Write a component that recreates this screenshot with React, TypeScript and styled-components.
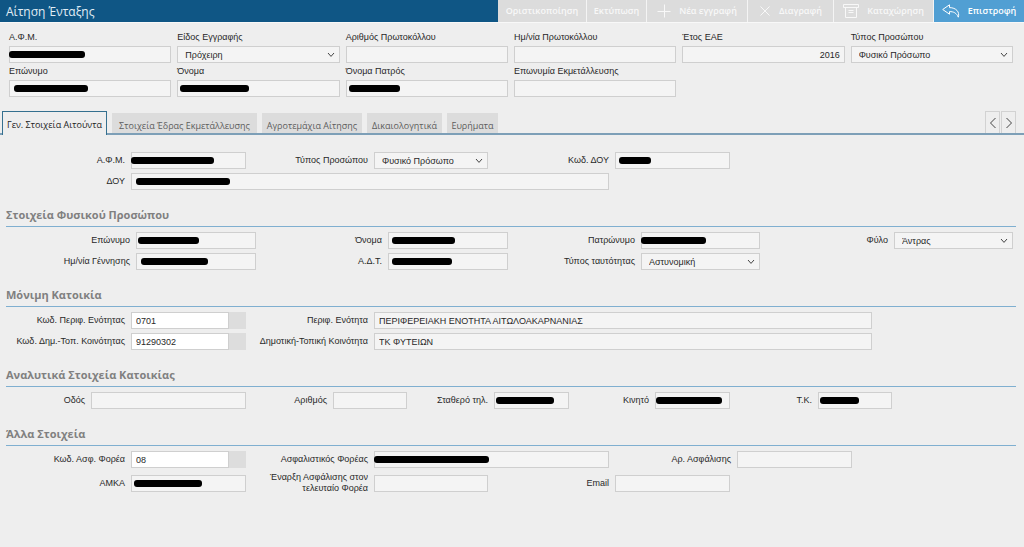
import React, { useId } from 'react';
import styled, { createGlobalStyle } from 'styled-components';

const GlobalStyle = createGlobalStyle`
  * { box-sizing: border-box; }
  body {
    margin: 0;
    background: #eeeeee;
    color: #282828;
    font-family: 'Liberation Sans', Arial, sans-serif;
    font-size: 9px;
    line-height: 12px;
  }
  button, input, select { font: inherit; color: inherit; }
`;

const uiFont = `'Open Sans', 'Noto Sans', sans-serif`;

const TopBar = styled.header`
  display: flex;
  height: 23px;
  border-bottom: 1px solid #f8f8f8;
  background: #0f5685;
`;

const PageTitle = styled.h1`
  flex: 1;
  margin: 0;
  padding-left: 6px;
  font: 400 12px/23px ${uiFont};
  color: #e2eef6;
`;

const Toolbar = styled.div`
  display: flex;
  gap: 1px;
  background: #f4f4f4;
`;

const ToolButton = styled.button<{ $width: number; $primary?: boolean }>`
  display: flex;
  align-items: center;
  justify-content: center;
  gap: 8px;
  width: ${p => p.$width}px;
  padding: 0;
  border: 0;
  background: ${p => (p.$primary ? '#519fd3' : '#dcdcdc')};
  color: ${p => (p.$primary ? '#ffffff' : '#f8f8f8')};
  font: 600 9px/22px ${uiFont};
  white-space: nowrap;
  svg { flex: none; }
`;

const Summary = styled.section`
  display: grid;
  grid-template-columns: repeat(6, minmax(0, 1fr));
  gap: 3px 6px;
  padding: 9px 11px 0 9px;
`;

const StackedField = styled.div`
  display: flex;
  flex-direction: column;
  gap: 4px;
  > label { line-height: 10px; height: 10px; }
`;

const ControlBox = styled.div`
  position: relative;
  display: flex;
  min-width: 0;
`;

const TextInput = styled.input<{ $editable?: boolean; $right?: boolean }>`
  flex: 1;
  min-width: 0;
  width: 100%;
  height: 17px;
  padding: 0 4px;
  border: 1px solid #cfcfcf;
  border-radius: 0;
  background: ${p => (p.$editable ? '#ffffff' : '#f4f4f4')};
  text-align: ${p => (p.$right ? 'right' : 'left')};
  outline: 0;
`;

const SelectInput = styled.select`
  flex: 1;
  min-width: 0;
  height: 17px;
  padding: 0 18px 0 7px;
  border: 1px solid #cfcfcf;
  border-radius: 0;
  background: #f4f4f4;
  appearance: none;
  outline: 0;
`;

const SelectArrow = styled.svg`
  position: absolute;
  right: 5px;
  top: 6px;
  pointer-events: none;
`;

const LookupButton = styled.button`
  width: 17px;
  height: 17px;
  padding: 0;
  border: 0;
  background: #dddddd;
`;

const Mark = styled.span<{ $left: number; $width: number }>`
  position: absolute;
  left: ${p => p.$left}px;
  top: 5px;
  width: ${p => p.$width}px;
  height: 7px;
  border-radius: 3px;
  background: #000000;
`;

const TabBar = styled.nav`
  display: flex;
  align-items: flex-end;
  gap: 5px;
  margin-top: 14px;
  padding: 0 8px 0 2px;
  border-bottom: 2px solid #7d9fb7;
`;

const Tab = styled.button<{ $width: number; $active?: boolean }>`
  width: ${p => p.$width}px;
  height: ${p => (p.$active ? 24 : 20)}px;
  margin-bottom: ${p => (p.$active ? -2 : 0)}px;
  padding: ${p => (p.$active ? '2px 0 0' : '6px 0 0')};
  border: ${p => (p.$active ? '1px solid #35708f' : '0')};
  border-bottom: 0;
  background: ${p => (p.$active ? '#eeeeee' : '#dcdcdc')};
  color: ${p => (p.$active ? '#222222' : '#5c5c5c')};
  font: 400 9px/14px ${uiFont};
  white-space: nowrap;
`;

const TabPager = styled.div`
  display: flex;
  gap: 1px;
  margin-left: auto;
`;

const PagerButton = styled.button`
  display: grid;
  place-items: center;
  width: 15px;
  height: 22px;
  padding: 0;
  border: 1px solid #d2d2d2;
  border-bottom: 0;
  background: #eeeeee;
`;

const Block = styled.section`
  padding-top: 13px;
  &:first-child { padding-top: 17px; }
`;

const SectionTitle = styled.h2`
  margin: 0 8px 5px 6px;
  padding-bottom: 3px;
  border-bottom: 1px solid #7fafd0;
  color: #808080;
  font: 700 11px/16px ${uiFont};
`;

const Row = styled.div<{ $cols: number[] }>`
  display: grid;
  grid-template-columns: ${p => p.$cols.map(c => `minmax(0, ${c}fr)`).join(' ')};
  align-items: center;
  margin-bottom: 4px;
`;

const SideLabel = styled.label`
  padding-right: 6px;
  text-align: right;
  line-height: 11px;
  white-space: pre-line;
`;

type FieldProps = {
  label: string;
  value?: string;
  kind?: 'text' | 'select' | 'lookup';
  mark?: [number, number];
  right?: boolean;
};

function Control({ id, value = '', kind = 'text', mark, right }: FieldProps & { id: string }) {
  return (
    <ControlBox>
      {kind === 'select' ? (
        <>
          <SelectInput id={id} defaultValue={value}>
            <option>{value}</option>
          </SelectInput>
          <SelectArrow width="8" height="6" viewBox="0 0 8 6" fill="none" stroke="#444">
            <path d="M1 1l3 3.4L7 1" />
          </SelectArrow>
        </>
      ) : (
        <TextInput id={id} defaultValue={value} readOnly={kind === 'text'} $editable={kind === 'lookup'} $right={right} />
      )}
      {kind === 'lookup' && <LookupButton type="button" aria-label="Αναζήτηση" />}
      {mark && <Mark $left={mark[0]} $width={mark[1]} />}
    </ControlBox>
  );
}

function Stacked(props: FieldProps) {
  const id = useId();
  return (
    <StackedField>
      <label htmlFor={id}>{props.label}</label>
      <Control id={id} {...props} />
    </StackedField>
  );
}

function Field(props: FieldProps) {
  const id = useId();
  return (
    <>
      <SideLabel htmlFor={id}>{props.label}</SideLabel>
      <Control id={id} {...props} />
    </>
  );
}

const PERSON = [136, 120, 132, 120, 133, 119, 134, 119, 11];
const HOME = [131, 115, 128, 498, 152];

export default function App() {
  return (
    <>
      <GlobalStyle />
      <TopBar>
        <PageTitle>Αίτηση Ένταξης</PageTitle>
        <Toolbar>
          <ToolButton $width={88}>Οριστικοποίηση</ToolButton>
          <ToolButton $width={59}>Εκτύπωση</ToolButton>
          <ToolButton $width={100}>
            <svg width="14" height="14" viewBox="0 0 14 14" stroke="currentColor"><path d="M7.500 .5v13M.5 7.500h13" /></svg>
            Νέα εγγραφή
          </ToolButton>
          <ToolButton $width={85}>
            <svg width="12" height="12" viewBox="0 0 12 12" stroke="currentColor"><path d="M1.500 1.500l9 9M10.500 1.500l-9 9" /></svg>
            Διαγραφή
          </ToolButton>
          <ToolButton $width={99}>
            <svg width="16" height="15" viewBox="0 0 16 15" fill="none" stroke="currentColor">
              <path d="M.5 .5h15v3H.5zM2.500 3.500v10h11v-10M5.500 6.500h5M5.500 8.500h5" />
            </svg>
            Καταχώρηση
          </ToolButton>
          <ToolButton $width={90} $primary>
            <svg width="18" height="14" viewBox="0 0 18 14" fill="none" stroke="currentColor" strokeLinejoin="round">
              <path d="M7.500 .8L.7 5.500l6.800 4.700V7.600c4 0 7 1.200 8.800 5.600C18 8 14 3.600 7.500 3.600z" />
            </svg>
            Επιστροφή
          </ToolButton>
        </Toolbar>
      </TopBar>

      <Summary>
        <Stacked label="Α.Φ.Μ." mark={[0, 76]} />
        <Stacked label="Είδος Εγγραφής" kind="select" value="Πρόχειρη" />
        <Stacked label="Αριθμός Πρωτοκόλλου" />
        <Stacked label="Ημ/νία Πρωτοκόλλου" />
        <Stacked label="Έτος ΕΑΕ" value="2016" right />
        <Stacked label="Τύπος Προσώπου" kind="select" value="Φυσικό Πρόσωπο" />
        <Stacked label="Επώνυμο" mark={[5, 74]} />
        <Stacked label="Όνομα" mark={[3, 69]} />
        <Stacked label="Όνομα Πατρός" mark={[3, 51]} />
        <Stacked label="Επωνυμία Εκμετάλλευσης" />
      </Summary>

      <TabBar>
        <Tab $width={105} $active>Γεν. Στοιχεία Αιτούντα</Tab>
        <Tab $width={145}>Στοιχεία Έδρας Εκμετάλλευσης</Tab>
        <Tab $width={100}>Αγροτεμάχια Αίτησης</Tab>
        <Tab $width={75}>Δικαιολογητικά</Tab>
        <Tab $width={51}>Ευρήματα</Tab>
        <TabPager>
          <PagerButton aria-label="Προηγούμενο">
            <svg width="8" height="12" viewBox="0 0 8 12" fill="none" stroke="#444"><path d="M6.500 1l-5 5 5 5" /></svg>
          </PagerButton>
          <PagerButton aria-label="Επόμενο">
            <svg width="8" height="12" viewBox="0 0 8 12" fill="none" stroke="#444"><path d="M1.500 1l5 5-5 5" /></svg>
          </PagerButton>
        </TabPager>
      </TabBar>

      <main>
        <Block>
          <Row $cols={[131, 115, 128, 114, 127, 115, 294]}>
            <Field label="Α.Φ.Μ." mark={[0, 83]} />
            <Field label="Τύπος Προσώπου" kind="select" value="Φυσικό Πρόσωπο" />
            <Field label="Κωδ. ΔΟΥ" mark={[4, 32]} />
          </Row>
          <Row $cols={[131, 478, 415]}>
            <Field label="ΔΟΥ" mark={[5, 94]} />
          </Row>
        </Block>

        <Block>
          <SectionTitle>Στοιχεία Φυσικού Προσώπου</SectionTitle>
          <Row $cols={PERSON}>
            <Field label="Επώνυμο" mark={[2, 61]} />
            <Field label="Όνομα" mark={[4, 63]} />
            <Field label="Πατρώνυμο" mark={[0, 65]} />
            <Field label="Φύλο" kind="select" value="Άντρας" />
          </Row>
          <Row $cols={PERSON}>
            <Field label="Ημ/νία Γέννησης" mark={[5, 67]} />
            <Field label="Α.Δ.Τ." mark={[4, 60]} />
            <Field label="Τύπος ταυτότητας" kind="select" value="Αστυνομική" />
          </Row>
        </Block>

        <Block>
          <SectionTitle>Μόνιμη Κατοικία</SectionTitle>
          <Row $cols={HOME}>
            <Field label="Κωδ. Περιφ. Ενότητας" kind="lookup" value="0701" />
            <Field label="Περιφ. Ενότητα" value="ΠΕΡΙΦΕΡΕΙΑΚΗ ΕΝΟΤΗΤΑ ΑΙΤΩΛΟΑΚΑΡΝΑΝΙΑΣ" />
          </Row>
          <Row $cols={HOME}>
            <Field label="Κωδ. Δημ.-Τοπ. Κοινότητας" kind="lookup" value="91290302" />
            <Field label="Δημοτική-Τοπική Κοινότητα" value="ΤΚ ΦΥΤΕΙΩΝ" />
          </Row>
        </Block>

        <Block>
          <SectionTitle>Αναλυτικά Στοιχεία Κατοικίας</SectionTitle>
          <Row $cols={[91, 155, 87, 74, 87, 75, 86, 75, 88, 74, 132]}>
            <Field label="Οδός" />
            <Field label="Αριθμός" />
            <Field label="Σταθερό τηλ." mark={[2, 58]} />
            <Field label="Κινητό" mark={[1, 66]} />
            <Field label="Τ.Κ." mark={[2, 39]} />
          </Row>
        </Block>

        <Block>
          <SectionTitle>Άλλα Στοιχεία</SectionTitle>
          <Row $cols={[131, 115, 128, 235, 128, 115, 172]}>
            <Field label="Κωδ. Ασφ. Φορέα" kind="lookup" value="08" />
            <Field label="Ασφαλιστικός Φορέας" mark={[0, 115]} />
            <Field label="Αρ. Ασφάλισης" />
          </Row>
          <Row $cols={[131, 115, 128, 114, 127, 115, 294]}>
            <Field label="ΑΜΚΑ" mark={[3, 68]} />
            <Field label={'Έναρξη Ασφάλισης στον\nτελευταίο Φορέα'} />
            <Field label="Email" />
          </Row>
        </Block>
      </main>
    </>
  );
}
